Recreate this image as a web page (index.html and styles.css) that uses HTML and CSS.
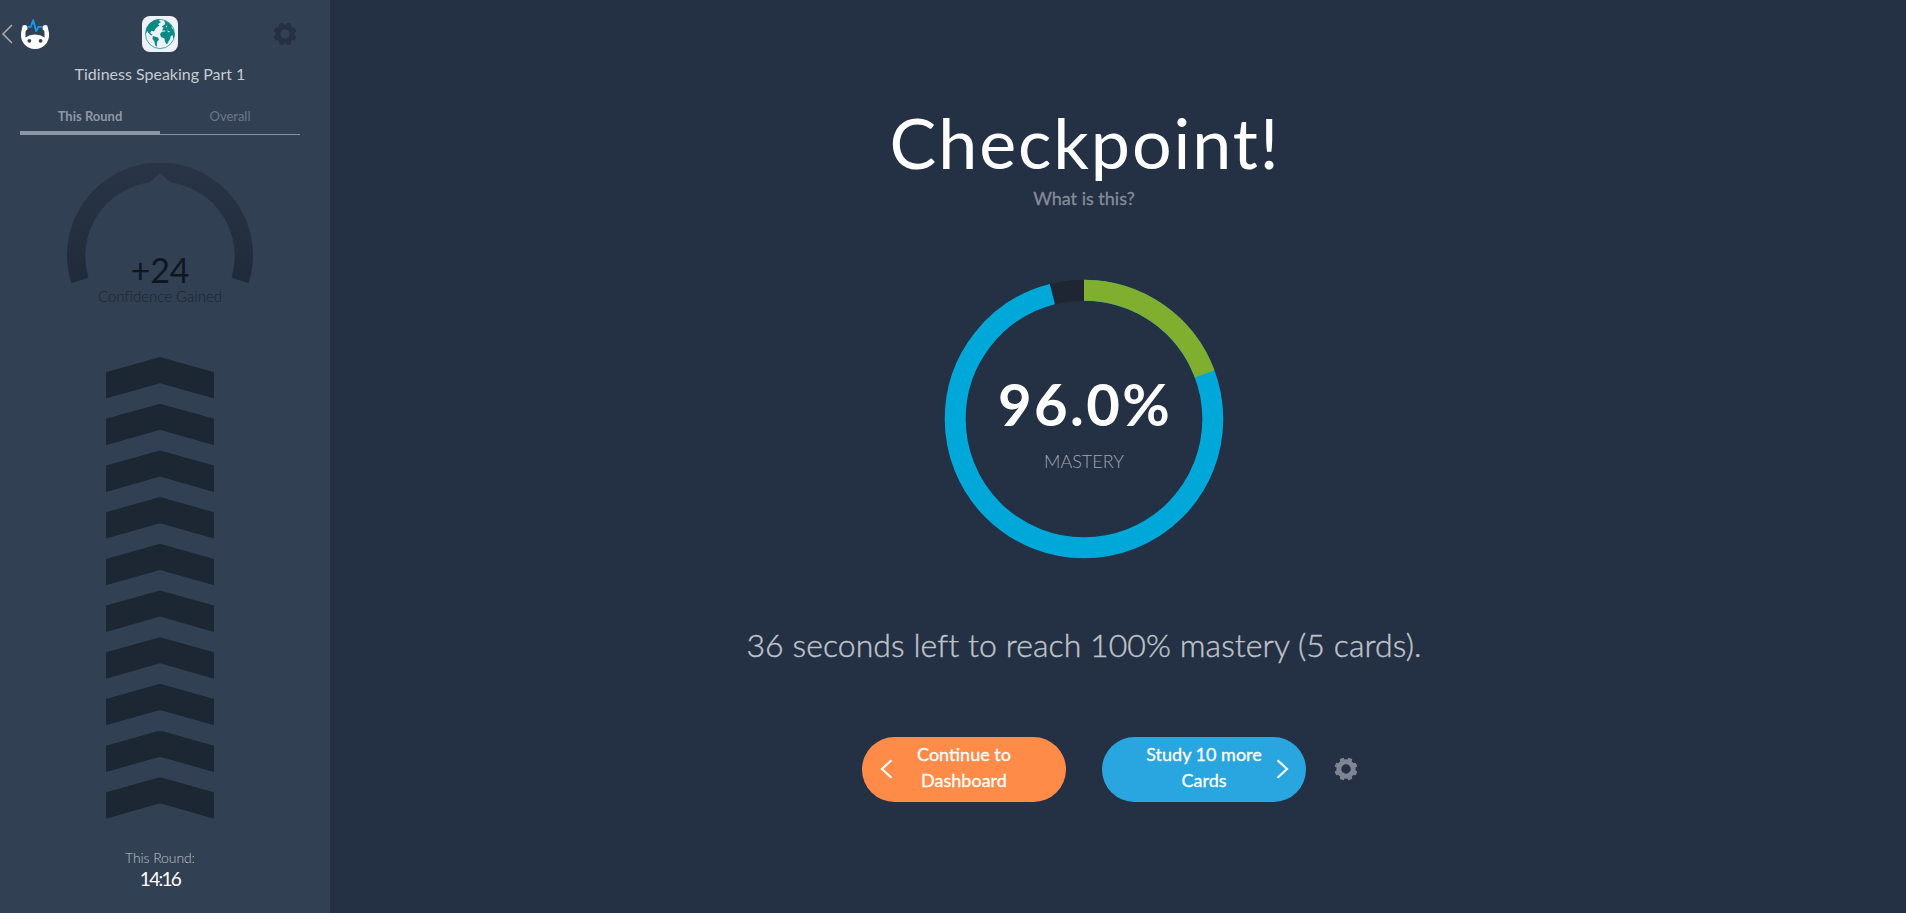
FILE: index.html
```
<!DOCTYPE html>
<html lang="en">
<head>
<meta charset="utf-8">
<title>Checkpoint</title>
<link rel="stylesheet" href="styles.css">
</head>
<body>
<svg class="defs" width="0" height="0" aria-hidden="true">
  <symbol id="gear" viewBox="0 0 24 24">
    <circle cx="12" cy="12" r="7.2" fill="none" stroke="currentColor" stroke-width="5"/>
    <g fill="currentColor">
      <rect id="tooth" x="9.7" y=".5" width="4.6" height="5" rx="1" transform="rotate(22.5 12 12)"/>
      <use href="#tooth" transform="rotate(45 12 12)"/>
      <use href="#tooth" transform="rotate(90 12 12)"/>
      <use href="#tooth" transform="rotate(135 12 12)"/>
      <use href="#tooth" transform="rotate(180 12 12)"/>
      <use href="#tooth" transform="rotate(225 12 12)"/>
      <use href="#tooth" transform="rotate(270 12 12)"/>
      <use href="#tooth" transform="rotate(315 12 12)"/>
    </g>
  </symbol>
</svg>
<div class="app">
  <aside class="sidebar">
    <header class="topbar">
      <div class="home">
        <svg class="back" viewBox="0 0 12 20"><path d="M11 1 L2 10 L11 19"/></svg>
        <svg class="logo" viewBox="0 0 28 30">
          <path fill="#fff" d="M1.2 8.5 Q1 6 3.6 6 Q6.6 6 6.6 8.8 Q6.6 11 4.6 12 L4.4 18.6 Q8.5 15.6 14 15.6 Q19.5 15.6 23.6 18.6 L23.4 12 Q21.4 11 21.4 8.8 Q21.4 6 24.4 6 Q27 6 26.8 8.5 L27.8 13 Q29 19 25.5 24.2 Q21 30 14 30 Q7 30 2.5 24.2 Q-1 19 .2 13 Z"/>
          <path fill="none" stroke="#129bf5" stroke-width="1.8" stroke-linejoin="round" d="M6.4 7.8 H9.8 L12.2 1.2 L15.2 12.2 L17.4 7.8 H21.6"/>
          <circle cx="8.4" cy="21.8" r="1.9" fill="#324053"/><circle cx="19.6" cy="21.8" r="1.9" fill="#324053"/>
        </svg>
      </div>
      <svg class="globe" viewBox="0 0 36 36">
        <rect width="36" height="36" rx="8" fill="#edf1f8"/>
        <circle cx="18" cy="18" r="14.6" fill="none" stroke="#0b8a84" stroke-width=".7"/>
        <path fill="#0b8a84" d="M4 18 Q3.2 11 8.5 6.5 Q13 3 18 3.4 L17 5 L19 6.2 L16 8 L17.5 9.5 L14 12 L12 15.5 L9.5 14.8 L8.2 17 L10.5 19 L9 19.5 L6.5 17 L5 15 Z M10.8 20 L16 21.5 L17 23.5 L15 26 L14.8 31 Q12.5 29 12.4 25.5 L10.5 23 Z M22 4.5 Q27.5 6 30.5 11 L29 10.5 L31.5 14 Q33.3 19 31.5 23 L30.5 19 L28.8 20 L28 23 L26.5 25.5 L25 28.5 L23 26 L22.5 22.5 L19 21 L18 18 L20 15.8 L22.8 15.6 L23.2 14.2 L20 14.8 L21.4 11.8 L19.8 10.6 L23.4 8 Z"/>
        <path fill="#edf1f8" d="M24.6 14.2 L28 15.5 L27 16.5 Z M23.8 10 L25.2 9.4 L24.6 12 Z"/>
      </svg>
      <svg class="gear gear-dark"><use href="#gear"/></svg>
    </header>
    <h2 class="deck">Tidiness Speaking Part 1</h2>
    <nav class="tabs">
      <div class="tab tab-active"><span>This Round</span></div>
      <div class="tab"><span>Overall</span></div>
    </nav>
    <section class="gauge">
      <svg class="gauge-arc" viewBox="0 0 186 122">
        <defs><linearGradient id="arc" x1="0" y1="0" x2="0" y2="1"><stop offset="0" stop-color="#293546"/><stop offset="1" stop-color="#202a3a"/></linearGradient></defs>
        <path fill="url(#arc)" d="M4.3 120.3 A93 93 0 1 1 181.7 120.3 L164.5 114.8 A74.5 74.5 0 0 0 103 19.3 L93 10 L83 19.3 A74.5 74.5 0 0 0 21.5 114.8 Z"/>
      </svg>
      <div class="gain"><span>+24</span></div>
      <div class="gain-label"><span>Confidence Gained</span></div>
    </section>
    <div class="ladder">
      <i></i><i></i><i></i><i></i><i></i><i></i><i></i><i></i><i></i><i></i>
    </div>
    <div class="timer-label"><span>This Round:</span></div>
    <div class="timer"><span>14:16</span></div>
  </aside>
  <main class="main">
    <h1 class="title"><span>Checkpoint!</span></h1>
    <div class="what"><span>What is this?</span></div>
    <div class="ring">
      <svg class="ring-svg" viewBox="0 0 280 280">
        <g fill="none" stroke-width="21" transform="rotate(-90 140 140)">
          <circle cx="140" cy="140" r="128.8" stroke="#1f2633"/>
          <circle cx="140" cy="140" r="128.8" stroke="#00a8d9" pathLength="1000" stroke-dasharray="960.5 1000"/>
          <circle cx="140" cy="140" r="128.8" stroke="#80ae2e" pathLength="1000" stroke-dasharray="193 1000"/>
        </g>
      </svg>
      <div class="ring-text">
        <div class="pct"><span>96.0%</span></div>
        <div class="mastery"><span>MASTERY</span></div>
      </div>
    </div>
    <p class="left"><span>36 seconds left to reach 100% mastery (5 cards).</span></p>
    <div class="actions">
      <div class="spacer"></div>
      <button class="btn btn-orange"><svg class="chev" viewBox="0 0 13 20"><path d="M11.5 1.2 L2 10 L11.5 18.8"/></svg><span class="btn-text">Continue to<br>Dashboard</span></button>
      <button class="btn btn-blue"><span class="btn-text">Study 10 more<br>Cards</span><svg class="chev chev-right" viewBox="0 0 13 20"><path d="M1.5 1.2 L11 10 L1.5 18.8"/></svg></button>
      <svg class="gear gear-light"><use href="#gear"/></svg>
    </div>
  </main>
</div>
</body>
</html>
```
FILE: styles.css
```
* { box-sizing: border-box; }
body { margin: 0; font-family: Lato, "Open Sans", sans-serif; font-variant-ligatures: none; background: #243044; overflow: hidden; }
svg { display: block; }
.defs { position: absolute; }
.app { display: flex; height: 913px; }

.sidebar { width: 330px; background: #324053; display: flex; flex-direction: column; align-items: flex-start; }
.topbar { width: 320px; height: 52px; padding: 16px 23px 0 1px; display: grid; grid-template-columns: 141px 36px 1fr; }
.home { display: flex; gap: 8px; }
.back { width: 12px; height: 20px; margin-top: 8px; fill: none; stroke: #b3aead; stroke-width: 1.5; }
.logo { width: 28px; height: 30px; margin-top: 3px; }
.globe { width: 36px; height: 36px; }
.gear { width: 24px; height: 24px; }
.gear-dark { justify-self: end; margin-top: 6px; color: #253142; }
.deck { width: 320px; margin: 12px 0 0; text-align: center; font-size: 16px; line-height: 20px; font-weight: 400; color: #c6cbd2; }
.tabs { width: 280px; height: 31px; margin: 20px 0 0 20px; display: flex; border-bottom: 1px solid #8590a0; font-size: 13px; line-height: 24px; text-align: center; color: #6d7887; }
.tab { width: 140px; height: 31px; }
.tab-active { font-weight: 700; color: #8d97a4; border-bottom: 4px solid #8c96a4; }

.gauge { width: 186px; margin: 28px 0 0 67px; text-align: center; }
.gauge-arc { width: 186px; height: 122px; }
.gain { margin-top: -35px; font-size: 34px; line-height: 40px; color: #10161e; }
.gain-label { margin-top: -4px; font-size: 15px; line-height: 20px; font-weight: 300; color: #1b2530; white-space: nowrap; }
.ladder { width: 108px; margin: 51px 0 0 106px; display: flex; flex-direction: column; gap: 5.2px; }
.ladder i { display: block; height: 41.5px; background: #1d2733; clip-path: polygon(50% 0, 100% 36.5%, 100% 100%, 50% 63%, 0 100%, 0 36.5%); }
.timer-label { width: 320px; margin-top: 29.2px; text-align: center; font-size: 14px; line-height: 20px; font-weight: 300; letter-spacing: -.1px; color: #bfc4ca; }
.timer { width: 320px; margin-top: -1px; text-align: center; font-size: 19px; line-height: 24px; letter-spacing: -1.7px; color: #fff; }

.main { flex: 1; padding: 92px 68px 0 0; display: flex; flex-direction: column; align-items: center; }
.title { margin: 0 -2px 0 0; font-size: 70px; line-height: 100px; font-weight: 400; letter-spacing: 1.9px; color: #fff; }
.what { margin-top: -6px; font-size: 18px; line-height: 24px; color: #858d99; -webkit-text-stroke: .3px #858d99; }
.ring { width: 280px; height: 280px; margin-top: 68.6px; display: grid; }
.ring-svg, .ring-text { grid-area: 1 / 1; }
.ring-svg { width: 280px; height: 280px; }
.ring-text { padding-top: 90px; text-align: center; }
.pct { font-size: 58px; line-height: 70px; font-weight: 700; letter-spacing: 2.4px; margin-right: -2px; color: #fff; }
.mastery { margin-top: 10px; font-size: 18px; line-height: 24px; font-weight: 300; color: #a0a6af; }
.left { margin: 64.8px 0 0; font-size: 32px; line-height: 44px; font-weight: 300; letter-spacing: .07px; color: #bfc3c9; -webkit-text-stroke: .4px #bfc3c9; white-space: nowrap; }
.actions { margin-top: 69.6px; display: flex; align-items: center; }
.spacer { width: 52px; }
.btn { width: 204px; height: 65px; padding: 0; border: 0; border-radius: 32.5px; display: grid; grid-template-columns: 48px 108px 48px; justify-items: center; align-items: center; font-family: inherit; color: #fff; }
.btn-orange { background: #ff8b49; }
.btn-blue { background: #29a5df; margin-left: 36px; }
.btn-text { grid-column: 2; grid-row: 1; margin-top: -4px; font-size: 18px; line-height: 26px; white-space: nowrap; -webkit-text-stroke: .3px #fff; }
.chev { width: 13px; height: 20px; fill: none; stroke: #fff; stroke-width: 2.2; grid-row: 1; grid-column: 1; }
.chev-right { grid-column: 3; }
.gear-light { margin: 0 0 1px 28px; color: #7f8590; }
```
